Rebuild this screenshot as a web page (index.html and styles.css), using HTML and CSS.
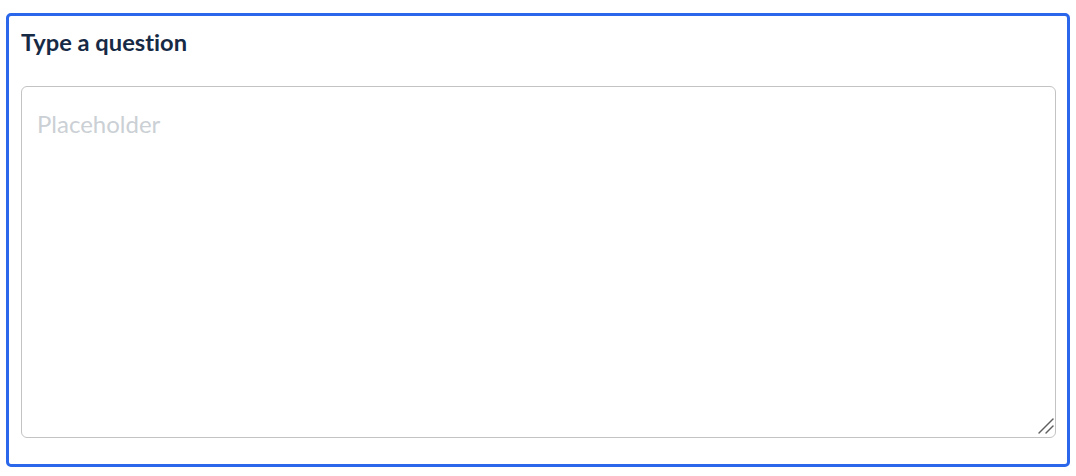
FILE: index.html
```html
<!DOCTYPE html>
<html>
<head>
<meta charset="utf-8">
<link rel="stylesheet" href="styles.css">
</head>
<body>
<div class="card">
  <label class="title" for="q">Type a question</label>
  <div class="field">
    <textarea id="q" class="input" placeholder="Placeholder"></textarea>
    <svg class="grip" width="20" height="20" viewBox="0 0 20 20" aria-hidden="true">
      <line x1="3" y1="15" x2="17" y2="1" stroke="#5f5f5f" stroke-width="1.4" stroke-linecap="round"/>
      <line x1="10" y1="15" x2="17" y2="8" stroke="#5f5f5f" stroke-width="1.4" stroke-linecap="round"/>
    </svg>
  </div>
</div>
</body>
</html>
```
FILE: styles.css
```css
html, body {
  margin: 0;
  padding: 0;
  background: #ffffff;
}
body {
  padding: 13px 6px 9px 6px;
  font-family: Lato, "Liberation Sans", sans-serif;
}
.card {
  border: 3px solid #2a67ea;
  border-radius: 5px;
  padding: 12px 11px 26px 12px;
  display: flex;
  flex-direction: column;
  gap: 30px;
}
.title {
  font-family: Lato, sans-serif;
  font-weight: 700;
  font-size: 23.7px;
  line-height: 28px;
  color: #172a45;
  font-variant-ligatures: none;
}
.field {
  position: relative;
  height: 352px;
}
.input {
  display: block;
  box-sizing: border-box;
  width: 100%;
  height: 100%;
  margin: 0;
  border: 1px solid #c3c3c3;
  border-radius: 6px;
  padding: 22px 15px 10px 15px;
  font-family: Lato, sans-serif;
  font-size: 24px;
  line-height: 29px;
  color: #1a1a1a;
  outline: none;
  resize: none;
  font-variant-ligatures: none;
}
.input::placeholder {
  color: #cbd0d5;
  opacity: 1;
}
.grip {
  position: absolute;
  right: 0;
  bottom: 0;
  pointer-events: none;
}
```
